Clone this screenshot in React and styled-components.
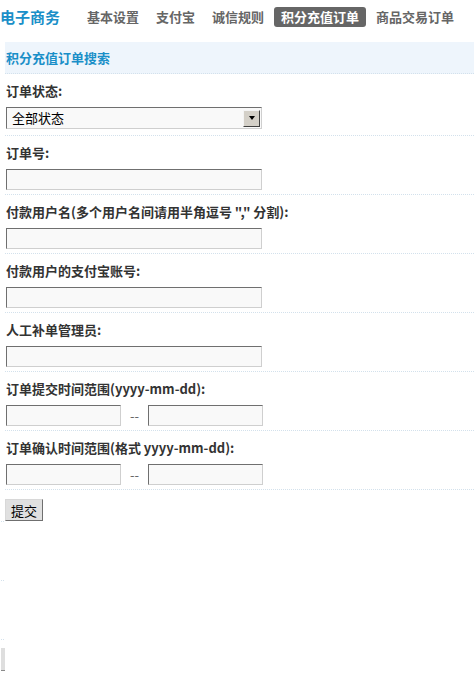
import React from "react";
import styled, { createGlobalStyle } from "styled-components";

const GlobalStyle = createGlobalStyle`
    body {
        margin: 0;
        background: #fff;
        font-family: "Noto Sans CJK SC", "Noto Sans", sans-serif;
        font-size: 13px;
        color: #333;
    }
`;

const Header = styled.div`
    display: flex;
    align-items: center;
    height: 34px;
`;

const Logo = styled.div`
    font-size: 15px;
    line-height: 20px;
    font-weight: bold;
    color: #1a8fc8;
    margin-right: 20px;
    white-space: nowrap;
`;

const Nav = styled.ul`
    display: flex;
    gap: 3px;
    margin: 0;
    padding: 0;
    list-style: none;
`;

const NavItem = styled.li`
    padding: 0 7px;
    height: 20px;
    line-height: 20px;
    font-size: 13px;
    font-weight: bold;
    white-space: nowrap;
    border-radius: 3px;
    color: ${(p) => (p.$active ? "#fff" : "#666")};
    background: ${(p) => (p.$active ? "#666" : "transparent")};
`;

const Panel = styled.div`
    margin: 8px 0 0 5px;
`;

const PanelHead = styled.div`
    height: 31px;
    display: flex;
    align-items: center;
    padding-left: 1px;
    background: #eef5fc;
    border-bottom: 1px dotted #d3e1ec;
    font-size: 13px;
    font-weight: bold;
    color: #1a8fc8;
`;

const Row = styled.div`
    padding: 9px 0 ${(p) => p.$pb ?? 4}px ${(p) => (p.$flush ? 0 : 1)}px;
    border-bottom: ${(p) => (p.$last ? "none" : "1px dotted #d3e1ec")};
`;

const Label = styled.div`
    font-size: 13px;
    line-height: 16px;
    font-weight: bold;
    color: #333;
    margin-bottom: 8px;
    white-space: nowrap;
`;

const TextInput = styled.input`
    display: block;
    box-sizing: border-box;
    width: ${(p) => p.$w || 256}px;
    height: 21px;
    margin: 0;
    padding: 0 3px;
    border: 1px solid;
    border-color: #6f6f6f #cfcfcf #cfcfcf #6f6f6f;
    background: #f9f9f9;
    font: 13px "Noto Sans CJK SC", sans-serif;
    outline: none;
`;

const SelectBox = styled.div`
    display: flex;
    align-items: center;
    box-sizing: border-box;
    width: 256px;
    height: 22px;
    padding-left: 5px;
    border: 1px solid;
    border-color: #6f6f6f #cfcfcf #cfcfcf #6f6f6f;
    background: #f9f9f9;
    font-size: 13px;
    line-height: 16px;
    color: #000;
`;

const ArrowButton = styled.span`
    display: flex;
    align-items: center;
    justify-content: center;
    box-sizing: border-box;
    margin-left: auto;
    margin-right: 1px;
    width: 17px;
    height: 17px;
    background: #d4d0c8;
    border: 1px solid;
    border-color: #f4f4f4 #404040 #404040 #f4f4f4;

    &::after {
        content: "";
        border-left: 3px solid transparent;
        border-right: 3px solid transparent;
        border-top: 4px solid #000;
    }
`;

const DateGroup = styled.div`
    display: flex;
    align-items: center;
    gap: 9px;
`;

const Dash = styled.span`
    color: #666;
    line-height: 16px;
`;

const SubmitButton = styled.button`
    box-sizing: border-box;
    width: 38px;
    height: 22px;
    margin: 0;
    padding: 0;
    border: 1px solid;
    border-color: #d8d8d8 #6f6f6f #6f6f6f #d8d8d8;
    background: #e0e0e0;
    font: 13px "Noto Sans CJK SC", sans-serif;
    color: #000;
`;

const Tail = styled.div`
    margin-left: 1px;
    width: 3px;
`;

const TailCell = styled.div`
    height: ${(p) => p.$h}px;
    border-bottom: 1px dotted #d3e1ec;
`;

const TailBar = styled.div`
    margin-top: 8px;
    width: 4px;
    height: 22px;
    background: #dedede;
    border-bottom: 1px solid #8a8a8a;
`;

const navItems = ["基本设置", "支付宝", "诚信规则", "积分充值订单", "商品交易订单"];

const fields = [
    "订单号:",
    "付款用户名(多个用户名间请用半角逗号 \",\" 分割):",
    "付款用户的支付宝账号:",
    "人工补单管理员:",
];

const dateFields = ["订单提交时间范围(yyyy-mm-dd):", "订单确认时间范围(格式 yyyy-mm-dd):"];

const App = () => {
    return (
        <>
            <GlobalStyle />
            <Header>
                <Logo>电子商务</Logo>
                <Nav>
                    {navItems.map((item) => (
                        <NavItem key={item} $active={item === "积分充值订单"}>
                            {item}
                        </NavItem>
                    ))}
                </Nav>
            </Header>
            <Panel>
                <PanelHead>积分充值订单搜索</PanelHead>
                <Row $pb={6}>
                    <Label>订单状态:</Label>
                    <SelectBox>
                        全部状态
                        <ArrowButton />
                    </SelectBox>
                </Row>
                {fields.map((f) => (
                    <Row key={f}>
                        <Label>{f}</Label>
                        <TextInput type="text" />
                    </Row>
                ))}
                {dateFields.map((f) => (
                    <Row key={f}>
                        <Label>{f}</Label>
                        <DateGroup>
                            <TextInput type="text" $w={115} />
                            <Dash>--</Dash>
                            <TextInput type="text" $w={115} />
                        </DateGroup>
                    </Row>
                ))}
                <Row $pb={0} $flush $last>
                    <SubmitButton type="button">提交</SubmitButton>
                </Row>
            </Panel>
            <Tail>
                <TailCell $h={0} />
                <TailCell $h={58} />
                <TailCell $h={58} />
                <TailBar />
            </Tail>
        </>
    );
};

export default App;
